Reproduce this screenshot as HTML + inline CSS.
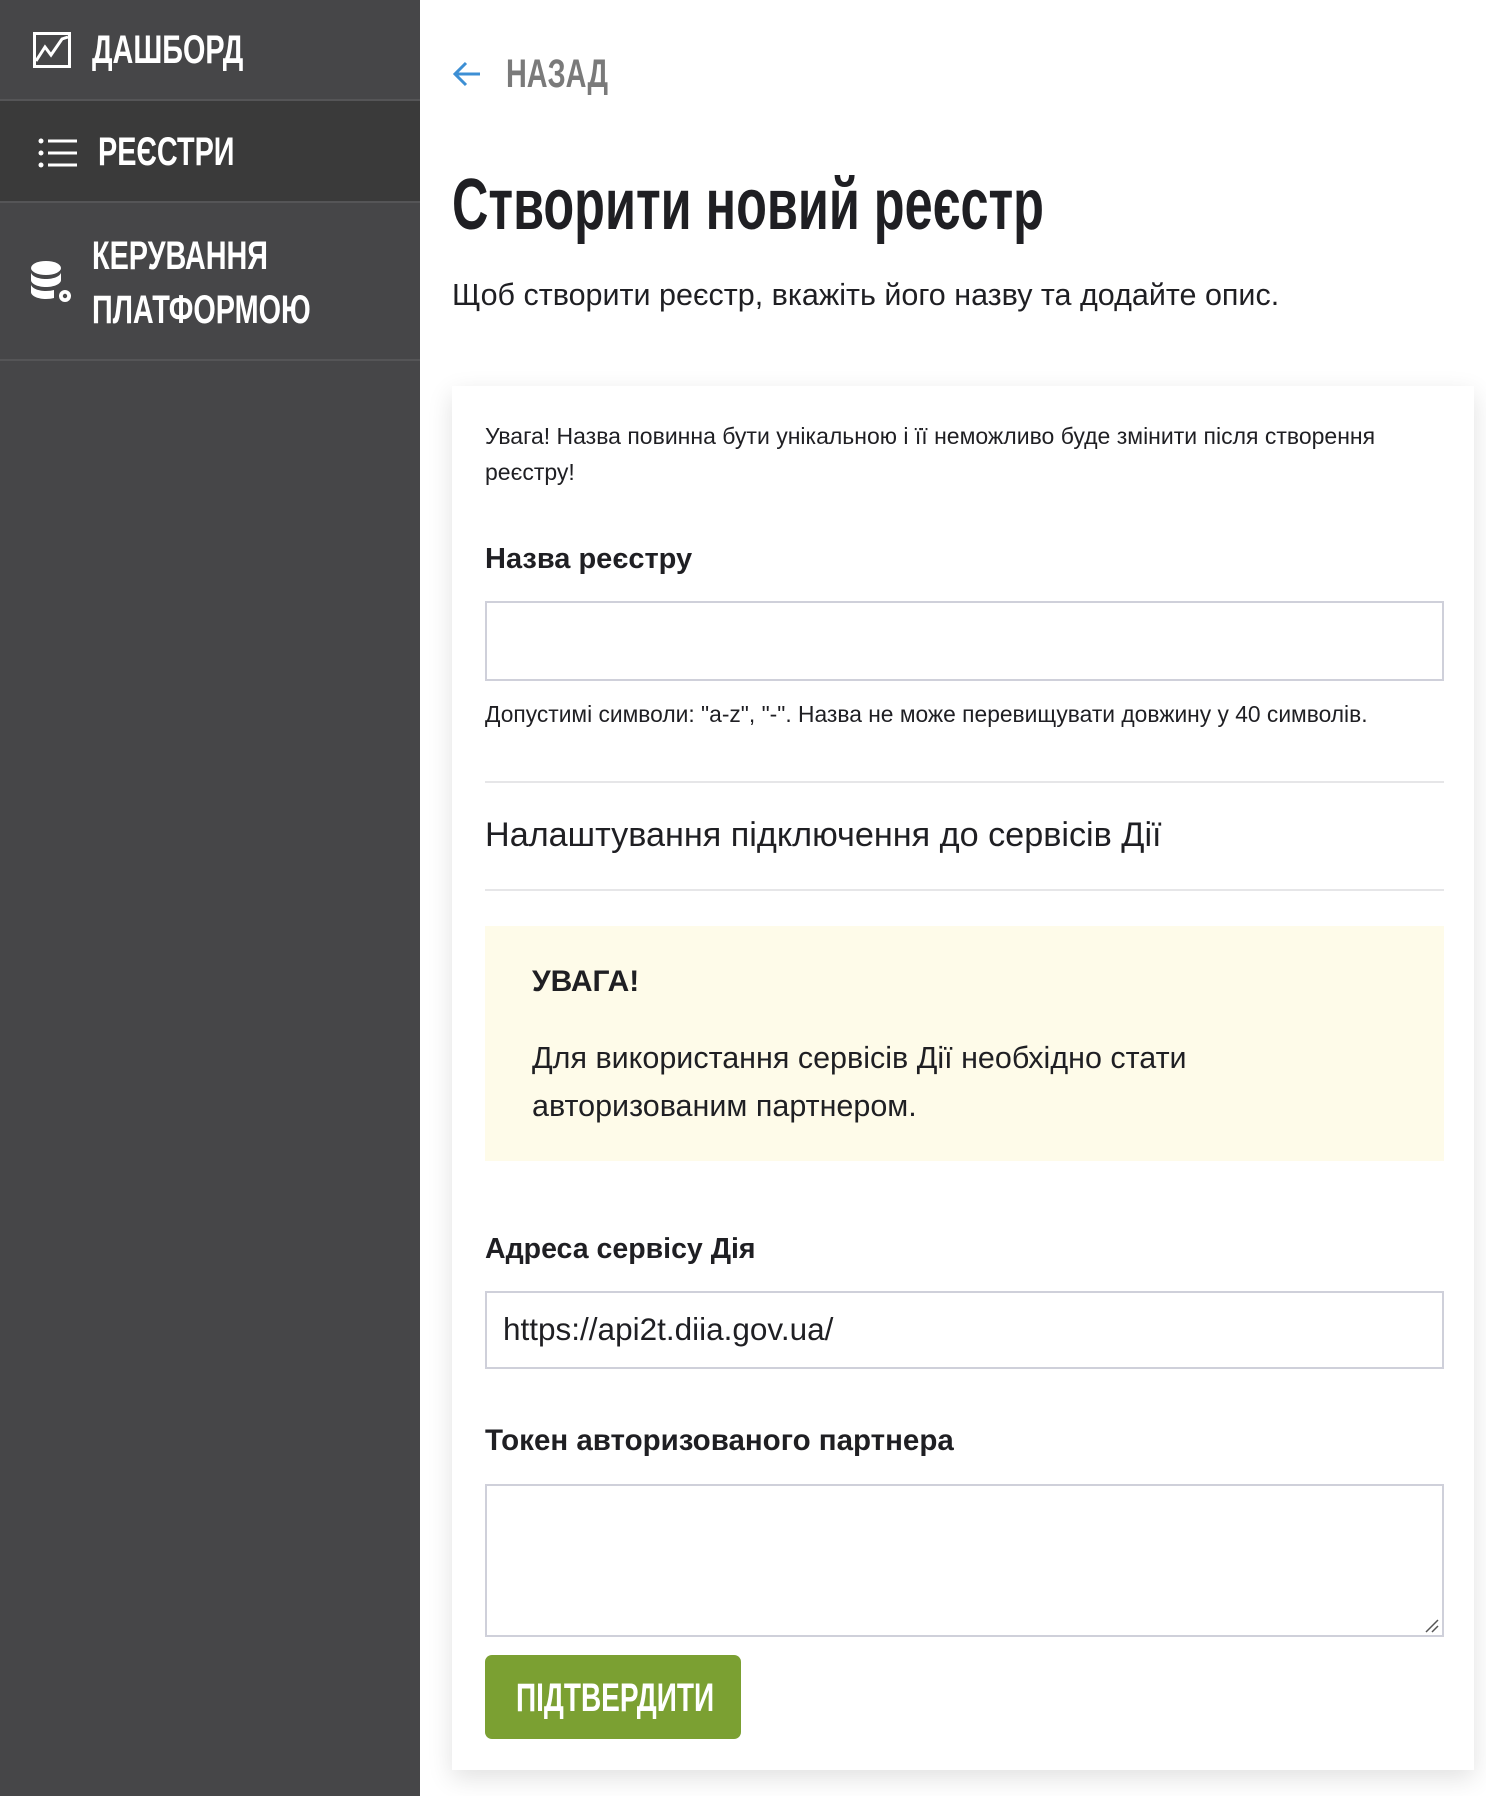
<!DOCTYPE html>
<html><head><meta charset="utf-8"><style>
*{box-sizing:border-box;margin:0;padding:0}
body{width:1486px;height:1796px;background:#fff;font-family:"Liberation Sans",sans-serif;color:#1f1f23;position:relative;overflow:hidden}
.sb{position:absolute;left:0;top:0;width:420px;height:1796px;background:#464648}
.it{position:absolute;left:0;width:420px;border-bottom:2px solid #555557}
.cond{font-family:"Liberation Sans",sans-serif;font-weight:bold;transform:scaleX(0.72);transform-origin:0 0;white-space:nowrap}
.nav{position:absolute;color:#fff;font-size:40px;line-height:52px}
.abs{position:absolute}
.card{position:absolute;left:452px;top:386px;width:1022px;height:1384px;background:#fff;box-shadow:0 8px 24px rgba(0,0,0,0.12)}
.t{position:absolute;left:485px;white-space:nowrap}
.inp{position:absolute;left:485px;width:959px;border:2px solid #cfd0da;background:#fff}
hr{position:absolute;left:485px;width:959px;border:0;border-top:2px solid #e6e6e8}
</style></head><body>
<div class="sb">
 <div class="it" style="top:0;height:101px"></div>
 <div class="it" style="top:101px;height:102px;background:#3a3a3a"></div>
 <div class="it" style="top:203px;height:158px"></div>
 <svg class="abs" style="left:32px;top:31px" width="40" height="38" viewBox="0 0 40 38"><rect x="1" y="1" width="38" height="36" fill="#fff"/><rect x="4" y="4" width="32" height="30" fill="#464648"/><path d="M4 30 L13 16 L19 24 L30 8 L36 6" stroke="#fff" stroke-width="3" fill="none"/></svg>
 <div class="nav cond" style="left:92px;top:24px">ДАШБОРД</div>
 <svg class="abs" style="left:38px;top:137px" width="40" height="32" viewBox="0 0 40 32"><g fill="#fff"><circle cx="3" cy="4" r="2.5"/><circle cx="3" cy="16" r="2.5"/><circle cx="3" cy="28" r="2.5"/><rect x="10" y="2.5" width="29" height="3"/><rect x="10" y="14.5" width="29" height="3"/><rect x="10" y="26.5" width="29" height="3"/></g></svg>
 <div class="nav cond" style="left:98px;top:126px">РЕЄСТРИ</div>
 <svg class="abs" style="left:30px;top:260px" width="44" height="46" viewBox="0 0 44 46"><g fill="#fff"><ellipse cx="16" cy="8" rx="15" ry="7"/><path d="M1 12c0 4 7 7 15 7s15-3 15-7v8c0 4-7 7-15 7S1 24 1 20z"/><path d="M1 24c0 4 7 7 15 7 3 0 6-.4 8-1v8c-2 .6-5 1-8 1-8 0-15-3-15-7z"/><circle cx="35" cy="36" r="6"/></g><circle cx="35" cy="36" r="2.2" fill="#464648"/></svg>
 <div class="nav cond" style="left:92px;top:230px">КЕРУВАННЯ</div>
 <div class="nav cond" style="left:92px;top:284px">ПЛАТФОРМОЮ</div>
</div>

<svg class="abs" style="left:452px;top:60px" width="30" height="28" viewBox="0 0 30 28"><path d="M28 14H4M14 3L3 14l11 11" stroke="#3d8fd4" stroke-width="3" fill="none"/></svg>
<div class="abs cond" style="left:506px;top:48px;font-size:40px;color:#7a7a7a;line-height:52px">НАЗАД</div>
<div class="abs cond" style="left:452px;top:160px;font-size:72px;line-height:90px;color:#1f1f23;transform:scaleX(0.70)">Створити новий реєстр</div>
<div class="abs" style="left:452px;top:278px;font-size:30.5px;color:#1f1f23;white-space:nowrap">Щоб створити реєстр, вкажіть його назву та додайте опис.</div>

<div class="card"></div>
<div class="t" style="top:418px;font-size:23px;line-height:36px">Увага! Назва повинна бути унікальною і її неможливо буде змінити після створення<br>реєстру!</div>
<div class="t" style="top:543px;font-size:29px;font-weight:bold">Назва реєстру</div>
<div class="inp" style="top:601px;height:80px"></div>
<div class="t" style="top:701px;font-size:22.8px">Допустимі символи: "a-z", "-". Назва не може перевищувати довжину у 40 символів.</div>
<hr style="top:781px">
<div class="t" style="top:816px;font-size:34.2px">Налаштування підключення до сервісів Дії</div>
<hr style="top:889px">
<div class="abs" style="left:485px;top:926px;width:959px;height:235px;background:#fefbe9"></div>
<div class="abs" style="left:532px;top:965px;font-size:30px;font-weight:bold">УВАГА!</div>
<div class="abs" style="left:532px;top:1034px;font-size:30.5px;line-height:48px;white-space:nowrap">Для використання сервісів Дії необхідно стати<br>авторизованим партнером.</div>
<div class="t" style="top:1233px;font-size:28.5px;font-weight:bold">Адреса сервісу Дія</div>
<div class="inp" style="top:1291px;height:78px"></div>
<div class="abs" style="left:503px;top:1311px;font-size:31.5px">https://api2t.diia.gov.ua/</div>
<div class="t" style="top:1424px;font-size:29.5px;font-weight:bold">Токен авторизованого партнера</div>
<div class="inp" style="top:1484px;height:153px"></div>
<svg class="abs" style="left:1424px;top:1618px" width="16" height="16"><path d="M2 14L14 2M8 14L14 8" stroke="#555" stroke-width="1.5"/></svg>
<div class="abs" style="left:485px;top:1655px;width:256px;height:84px;background:#7ba032;border-radius:7px"></div>
<div class="abs cond" style="left:516px;top:1676px;font-size:40px;line-height:44px;color:#fff;transform:scaleX(0.7)">ПІДТВЕРДИТИ</div>
</body></html>
